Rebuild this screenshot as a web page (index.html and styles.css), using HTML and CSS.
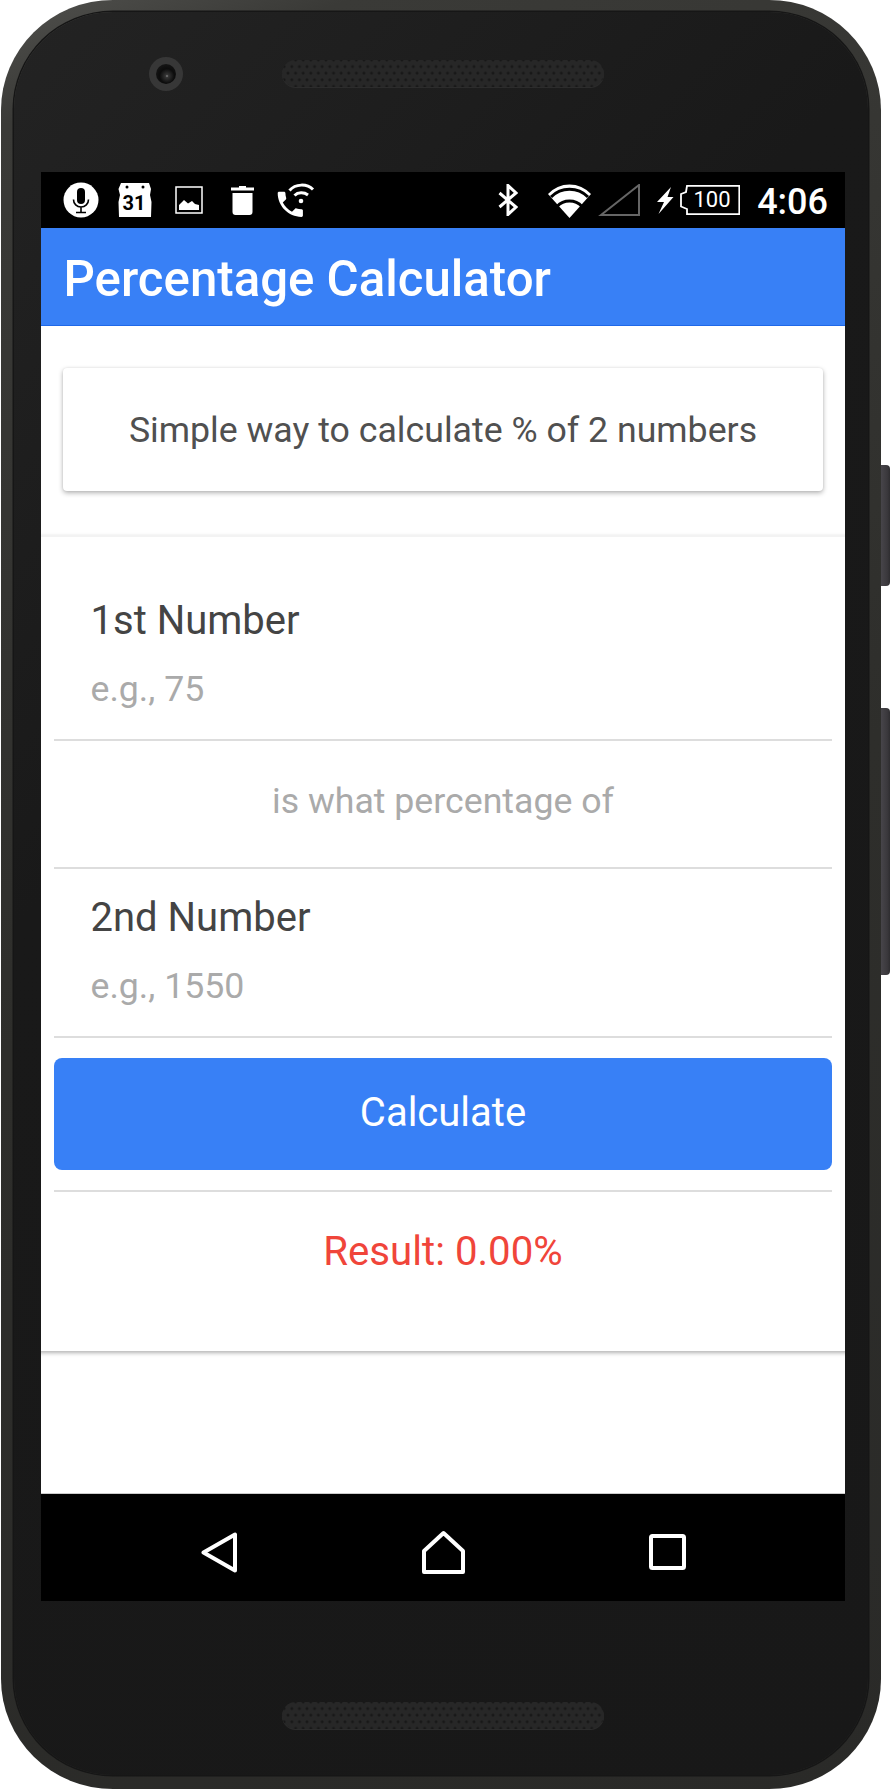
FILE: index.html
```html
<!DOCTYPE html>
<html lang="en">
<head>
  <meta charset="UTF-8">
  <title>Percentage Calculator</title>
  <link rel="stylesheet" href="styles.css">
</head>
<body>

  <div class="phone">
    <span class="side-btn power"></span>
    <span class="side-btn volume"></span>

    <div class="bezel">
      <div class="bezel-top">
        <span class="camera"><span class="lens"></span></span>
        <span class="speaker"></span>
      </div>

      <div class="screen">
        <div class="status-bar">
          <div class="status-left">
            <svg class="ic-mic" width="36" height="36" viewBox="0 0 36 36">
              <circle cx="18" cy="18" r="17.5" fill="#fff"/>
              <rect x="14" y="6" width="8" height="16" rx="4" fill="#000"/>
              <path d="M10.5 17.5c0 4.5 3.3 7.5 7.5 7.5s7.5-3 7.5-7.5M18 25v5M13 30.5h10" fill="none" stroke="#000" stroke-width="1.6"/>
            </svg>
            <svg class="ic-cal" width="34" height="36" viewBox="0 0 34 36">
              <path d="M3 1H31L33 7 32 13 33.500 20 33 35H1L.5 20 2 13 .5 7Z" fill="#fff"/>
              <circle cx="9" cy="5" r="1.500" fill="#000"/>
              <circle cx="25" cy="5" r="1.500" fill="#000"/>
              <text x="16" y="28" class="cal-text">31</text>
            </svg>
            <svg class="ic-image" width="28" height="28" viewBox="0 0 28 28">
              <rect x="1" y="1" width="26" height="26" fill="none" stroke="#fff" stroke-width="1.500"/>
              <path d="M4 24V19L9 14 13 17.500 17 15 20 18 24 19V24Z" fill="#fff"/>
            </svg>
            <svg class="ic-trash" width="23" height="29" viewBox="0 0 23 29">
              <path d="M8 0H15V1.500H23V4.500H0V1.500H8Z" fill="#fff"/>
              <path d="M1.500 7H21.500V26C21.500 27.800 20.300 29 18.500 29H4.500C2.700 29 1.500 27.800 1.500 26Z" fill="#fff"/>
            </svg>
            <svg class="ic-wifi-call" width="38" height="35" viewBox="0 0 38 35">
              <path transform="translate(-3.500 4.500) scale(1.400)" d="M6.620 10.790c1.440 2.830 3.760 5.140 6.590 6.590l2.200-2.200c.27-.27.67-.36 1.020-.24 1.120.37 2.330.57 3.570.57.550 0 1 .45 1 1V20c0 .55-.45 1-1 1-9.390 0-17-7.610-17-17 0-.55.45-1 1-1h3.500c.55 0 1 .45 1 1 0 1.250.2 2.450.57 3.570.11.35.03.74-.25 1.020l-2.200 2.200z" fill="#fff"/>
              <path d="M12.500 7.500C18.500 .5 30 .5 36 6.500M17.500 12.500C21 9 27 9 31 12" fill="none" stroke="#fff" stroke-width="3"/>
              <circle cx="24" cy="18" r="2.300" fill="#fff"/>
            </svg>
          </div>
          <div class="status-right">
            <svg class="ic-bt" width="20" height="32" viewBox="0 0 20 32">
              <path d="M1.500 9L18 23 10 30.500V1.500L18 9 1.500 23" fill="none" stroke="#fff" stroke-width="3"/>
            </svg>
            <svg class="ic-wifi" width="43" height="35" viewBox="0 0 43 35">
              <path d="M21.500 35L0 11A29 29 0 0 1 43 11Z" fill="#fff"/>
              <path d="M3 9A26 26 0 0 1 40 9" transform="translate(0 5)" fill="none" stroke="#000" stroke-width="3"/>
              <path d="M9 20A17 17 0 0 1 34 20" transform="translate(0 3.500)" fill="none" stroke="#000" stroke-width="3"/>
            </svg>
            <svg class="ic-signal" width="42" height="32" viewBox="0 0 42 32">
              <path d="M3 31L41 1V31Z" fill="none" stroke="#666" stroke-width="2"/>
            </svg>
            <svg class="ic-bolt" width="17" height="27" viewBox="0 0 17 27">
              <path d="M14 0L0 15H7L1.500 27 16.500 10H10.500Z" fill="#fff"/>
            </svg>
            <svg class="ic-batt" width="60" height="30" viewBox="0 0 60 30">
              <path d="M6 7L7 .8H59.300V29.200H7V24L1 21.500V9Z" fill="none" stroke="#fff" stroke-width="1.800"/>
              <text x="32" y="22" class="batt-text">100</text>
            </svg>
            <span class="clock">4:06</span>
          </div>
        </div>

        <header class="app-bar">Percentage Calculator</header>

        <main class="content">
          <div class="card">Simple way to calculate % of 2 numbers</div>

          <div class="list">
            <div class="field first">
              <label class="field-label">1st Number</label>
              <div class="placeholder">e.g., 75</div>
            </div>
            <div class="between">is what percentage of</div>
            <div class="field second">
              <label class="field-label">2nd Number</label>
              <div class="placeholder">e.g., 1550</div>
            </div>
            <div class="btn-row">
              <button class="calc-btn" type="button">Calculate</button>
            </div>
            <div class="result">Result: 0.00%</div>
          </div>
        </main>

        <nav class="nav-bar">
          <svg class="nav-back" width="36" height="41" viewBox="0 0 36 41">
            <path d="M34 2.500V38.500L2.500 20.500Z" fill="none" stroke="#fff" stroke-width="4" stroke-linejoin="round"/>
          </svg>
          <svg class="nav-home" width="43" height="44" viewBox="0 0 43 44">
            <path d="M21.500 3L41 21V42H2V21Z" fill="none" stroke="#fff" stroke-width="4" stroke-linejoin="round"/>
          </svg>
          <svg class="nav-recent" width="37" height="36" viewBox="0 0 37 36">
            <rect x="2" y="2" width="33" height="32" rx="1.500" fill="none" stroke="#fff" stroke-width="4"/>
          </svg>
        </nav>
      </div>

      <div class="bezel-bottom">
        <span class="speaker"></span>
      </div>
    </div>
  </div>

</body>
</html>
```

FILE: styles.css
```css
* {
  box-sizing: border-box;
}

body {
  margin: 0;
  background: #fff;
  font-family: Roboto, sans-serif;
}

.phone {
  position: relative;
  width: 880px;
  height: 1789px;
  margin-left: 1px;
  padding: 12px 13px 14px;
  background: linear-gradient(160deg, #50504d 0%, #3a3a37 6%, #2e2e2b 50%, #2a2a28 100%);
  border-radius: 112px / 110px;
}

.side-btn {
  position: absolute;
  right: -9px;
  width: 9px;
  background: linear-gradient(90deg, #47454a, #3a383c 70%, #2e2d30);
  border-radius: 0 4px 4px 0;
}

.power {
  top: 465px;
  height: 121px;
}

.volume {
  top: 708px;
  height: 267px;
}

.bezel {
  display: flex;
  flex-direction: column;
  height: 100%;
  background: linear-gradient(135deg, #232323 0%, #191919 35%, #181818 100%);
  border-radius: 99px / 97px;
  box-shadow: 0 0 0 1.500px #161616;
}

.bezel-top {
  display: flex;
  align-items: center;
  height: 160px;
  padding: 48px 0 85px 135px;
}

.camera {
  display: flex;
  align-items: center;
  justify-content: center;
  width: 34px;
  height: 34px;
  margin-right: 99px;
  background: #373737;
  border-radius: 50%;
}

.lens {
  width: 20px;
  height: 20px;
  background: radial-gradient(circle at 55% 60%, #888 0, #333 10%, #0c0c0c 45%, #1d1d1d 100%);
  border-radius: 50%;
}

.speaker {
  display: block;
  width: 322px;
  height: 27px;
  background-color: #272727;
  background-image:
    radial-gradient(circle, #181818 1.200px, transparent 1.700px),
    radial-gradient(circle, #181818 1.200px, transparent 1.700px);
  background-size: 7.600px 13.200px;
  background-position: 6px 0, 9.800px 6.600px;
  padding: 3px 6px;
  border-radius: 14px;
  box-shadow: 0 1px 0 #2c2c2c;
}

.screen {
  display: flex;
  flex-direction: column;
  width: 804px;
  height: 1429px;
  margin-left: 27px;
  overflow: hidden;
  background: #fff;
}

.status-bar {
  display: flex;
  flex: none;
  align-items: center;
  justify-content: space-between;
  height: 56px;
  padding-left: 22px;
  padding-right: 17px;
  background: #000;
}

.status-left,
.status-right {
  display: flex;
  align-items: center;
}

.ic-cal { margin-left: 19px; }
.ic-image { margin-left: 23px; }
.ic-trash { margin-left: 28px; }
.ic-wifi-call { margin-left: 23px; }

.ic-wifi { margin-left: 30px; }
.ic-signal { margin-left: 7px; }
.ic-bolt { margin-left: 17px; }
.ic-batt { margin-left: 6px; }

.cal-text {
  fill: #000;
  font: 700 20px Roboto, sans-serif;
  text-anchor: middle;
}

.batt-text {
  fill: #fff;
  font: 400 22px Roboto, sans-serif;
  text-anchor: middle;
}

.clock {
  margin-left: 17px;
  padding-top: 4px;
  color: #fff;
  font-size: 36px;
  font-weight: 500;
  line-height: 1;
}

.app-bar {
  flex: none;
  height: 98px;
  padding: 3px 22.500px 0;
  background: #3880f6;
  border-bottom: 1px solid #1f68e8;
  color: #fff;
  font-size: 49.200px;
  font-weight: 500;
  line-height: 97px;
}

.content {
  flex: 1;
  padding-top: 42px;
  background: #fff;
}

.card {
  height: 123px;
  margin: 0 22px 44px;
  background: #fff;
  border-radius: 4px;
  box-shadow: 0 2px 5px rgba(0, 0, 0, .3), 0 0 2px rgba(0, 0, 0, .08);
  color: #505050;
  font-size: 35.700px;
  line-height: 125px;
  text-align: center;
}

.list {
  height: 816px;
  margin: 0 -8px;
  padding: 0 21px;
  background: #fff;
  border-top: 2px solid #f3f3f3;
  box-shadow: 0 2px 4px rgba(0, 0, 0, .3);
}

.field {
  border-bottom: 2px solid #ddd;
  padding-left: 36.500px;
}

.first {
  height: 204px;
  padding-top: 62px;
}

.second {
  height: 169px;
  padding-top: 27px;
}

.field-label {
  display: block;
  color: #444;
  font-size: 40px;
  line-height: 44px;
}

.placeholder {
  margin-top: 26px;
  color: #aaa;
  font-size: 35.700px;
  line-height: 40px;
}

.between {
  height: 128px;
  border-bottom: 2px solid #ddd;
  color: #aaa;
  font-size: 35.700px;
  line-height: 120px;
  text-align: center;
}

.btn-row {
  padding: 20px 0;
  border-bottom: 2px solid #ddd;
}

.calc-btn {
  display: block;
  width: 100%;
  height: 112px;
  padding: 0 0 4px;
  border: none;
  border-radius: 8px;
  background: #3880f6;
  color: #fff;
  font-family: Roboto, sans-serif;
  font-size: 40px;
}

.result {
  color: #f0453a;
  font-size: 40.200px;
  line-height: 120px;
  text-align: center;
}

.nav-bar {
  display: flex;
  flex: none;
  align-items: center;
  height: 108px;
  padding-top: 9px;
  padding-left: 160px;
  background: #000;
  border-top: 1px solid #ccc;
}

.nav-home { margin-left: 185px; }
.nav-recent { margin-left: 184px; }

.bezel-bottom {
  padding: 101px 0 0 268px;
}
```
